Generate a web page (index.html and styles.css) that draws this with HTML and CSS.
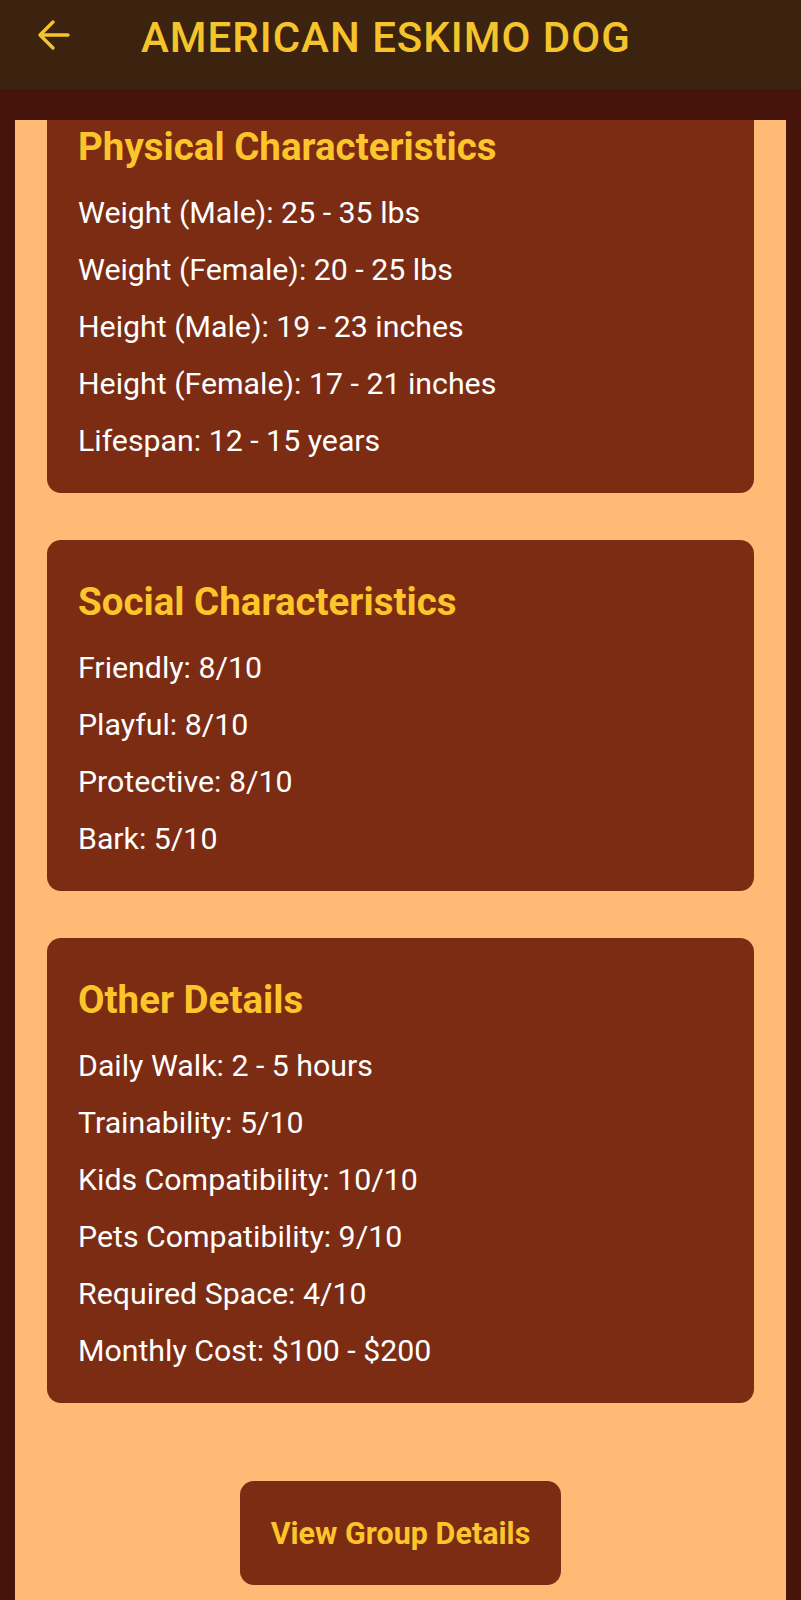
FILE: index.html
```html
<!DOCTYPE html>
<html lang="en">
<head>
<meta charset="utf-8">
<title>American Eskimo Dog</title>
<link rel="stylesheet" href="styles.css">
</head>
<body>
<header class="appbar">
  <svg class="back" width="34" height="32" viewBox="0 0 34 32" aria-hidden="true">
    <path d="M32 16 H4 M17 3 L4 16 L17 29" fill="none" stroke="#f5c42c" stroke-width="3.4" stroke-linecap="round" stroke-linejoin="round"/>
  </svg>
  <h1 class="title">AMERICAN ESKIMO DOG</h1>
</header>
<main class="panel">
  <div class="scroll">
    <section class="card">
      <h2 class="card-title">Physical Characteristics</h2>
      <p class="row">Weight (Male): 25 - 35 lbs</p>
      <p class="row">Weight (Female): 20 - 25 lbs</p>
      <p class="row">Height (Male): 19 - 23 inches</p>
      <p class="row">Height (Female): 17 - 21 inches</p>
      <p class="row">Lifespan: 12 - 15 years</p>
    </section>
    <section class="card">
      <h2 class="card-title">Social Characteristics</h2>
      <p class="row">Friendly: 8/10</p>
      <p class="row">Playful: 8/10</p>
      <p class="row">Protective: 8/10</p>
      <p class="row">Bark: 5/10</p>
    </section>
    <section class="card">
      <h2 class="card-title">Other Details</h2>
      <p class="row">Daily Walk: 2 - 5 hours</p>
      <p class="row">Trainability: 5/10</p>
      <p class="row">Kids Compatibility: 10/10</p>
      <p class="row">Pets Compatibility: 9/10</p>
      <p class="row">Required Space: 4/10</p>
      <p class="row">Monthly Cost: $100 - $200</p>
    </section>
    <div class="actions">
      <button class="btn" type="button">View Group Details</button>
    </div>
  </div>
</main>
</body>
</html>
```
FILE: styles.css
```css
* { box-sizing: border-box; }
html, body { margin: 0; padding: 0; }
body {
  background: #46140a;
  font-family: Roboto, "Liberation Sans", sans-serif;
  height: 1600px;
  overflow: hidden;
}
.appbar {
  height: 89px;
  background: #3c230f;
  display: flex;
  align-items: flex-start;
  padding-left: 36px;
}
.back { display: block; flex: none; margin-top: 19px; }
.title {
  margin: 14px 0 0 71px;
  font-weight: 500;
  font-size: 42px;
  line-height: 48px;
  letter-spacing: 1px;
  color: #f5c42c;
}
.panel {
  margin: 31px 15px 0;
  height: 1480px;
  background: #ffba75;
  overflow: hidden;
  padding: 0 32px;
}
.scroll {
  margin-top: -35px;
  display: flex;
  flex-direction: column;
  gap: 47px;
}
.card {
  background: #7c2c13;
  border-radius: 14px;
  padding: 39px 31px 24px;
}
.card-title {
  margin: 0 0 14px;
  font-weight: 700;
  font-size: 38.5px;
  line-height: 46px;
  color: #fcc52b;
}
.row {
  margin: 0;
  font-size: 30.3px;
  line-height: 57px;
  color: #ffffff;
}
.actions {
  display: flex;
  justify-content: center;
  margin-top: 31px;
}
.btn {
  width: 321px;
  height: 104px;
  border: 0;
  border-radius: 14px;
  background: #7c2c13;
  color: #fcc52b;
  font-family: Roboto, "Liberation Sans", sans-serif;
  font-weight: 700;
  font-size: 30.5px;
}
```
